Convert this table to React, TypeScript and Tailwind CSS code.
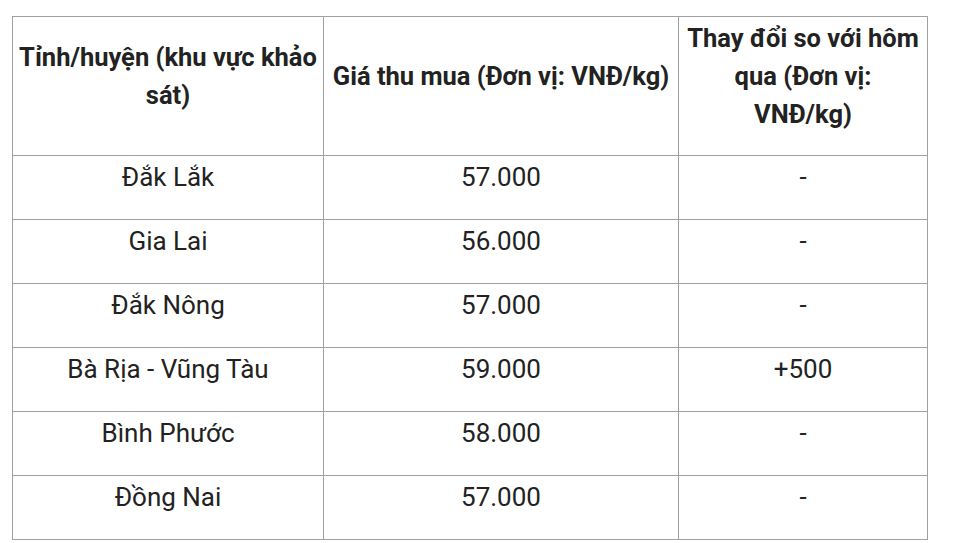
import React from "react";

const rows: [string, string, string][] = [
  ["Đắk Lắk", "57.000", "-"],
  ["Gia Lai", "56.000", "-"],
  ["Đắk Nông", "57.000", "-"],
  ["Bà Rịa - Vũng Tàu", "59.000", "+500"],
  ["Bình Phước", "58.000", "-"],
  ["Đồng Nai", "57.000", "-"],
];

export default function App() {
  return (
    <div
      className="w-[957px] h-[543px] bg-white pt-[16px] pl-[12px] text-[#222222]"
      style={{ fontFamily: "Roboto, 'Liberation Sans', sans-serif" }}
    >
      <table className="border-collapse table-fixed w-[915px] text-[26px] leading-[38px]">
        <colgroup>
          <col className="w-[311px]" />
          <col className="w-[355px]" />
          <col className="w-[249px]" />
        </colgroup>
        <thead>
          <tr className="h-[139px]">
            <th className="border border-[#a0a0a0] px-[4px] pt-[2px] pb-[22px] text-[25.5px] font-bold text-center align-middle">
              Tỉnh/huyện (khu vực khảo sát)
            </th>
            <th className="border border-[#a0a0a0] px-[4px] pt-[2px] pb-[22px] text-[25.5px] font-bold text-center align-middle">
              Giá thu mua (Đơn vị: VNĐ/kg)
            </th>
            <th className="border border-[#a0a0a0] px-[4px] pt-[2px] pb-[22px] text-[25.5px] font-bold text-center align-middle">
              Thay đổi so với hôm qua (Đơn vị: VNĐ/kg)
            </th>
          </tr>
        </thead>
        <tbody>
          {rows.map((r, i) => (
            <tr key={i} className="h-[64px]">
              {r.map((c, j) => (
                <td
                  key={j}
                  className="border border-[#a0a0a0] px-[6px] pt-[2px] pb-[23px] text-center align-middle font-normal"
                >
                  {c}
                </td>
              ))}
            </tr>
          ))}
        </tbody>
      </table>
    </div>
  );
}
